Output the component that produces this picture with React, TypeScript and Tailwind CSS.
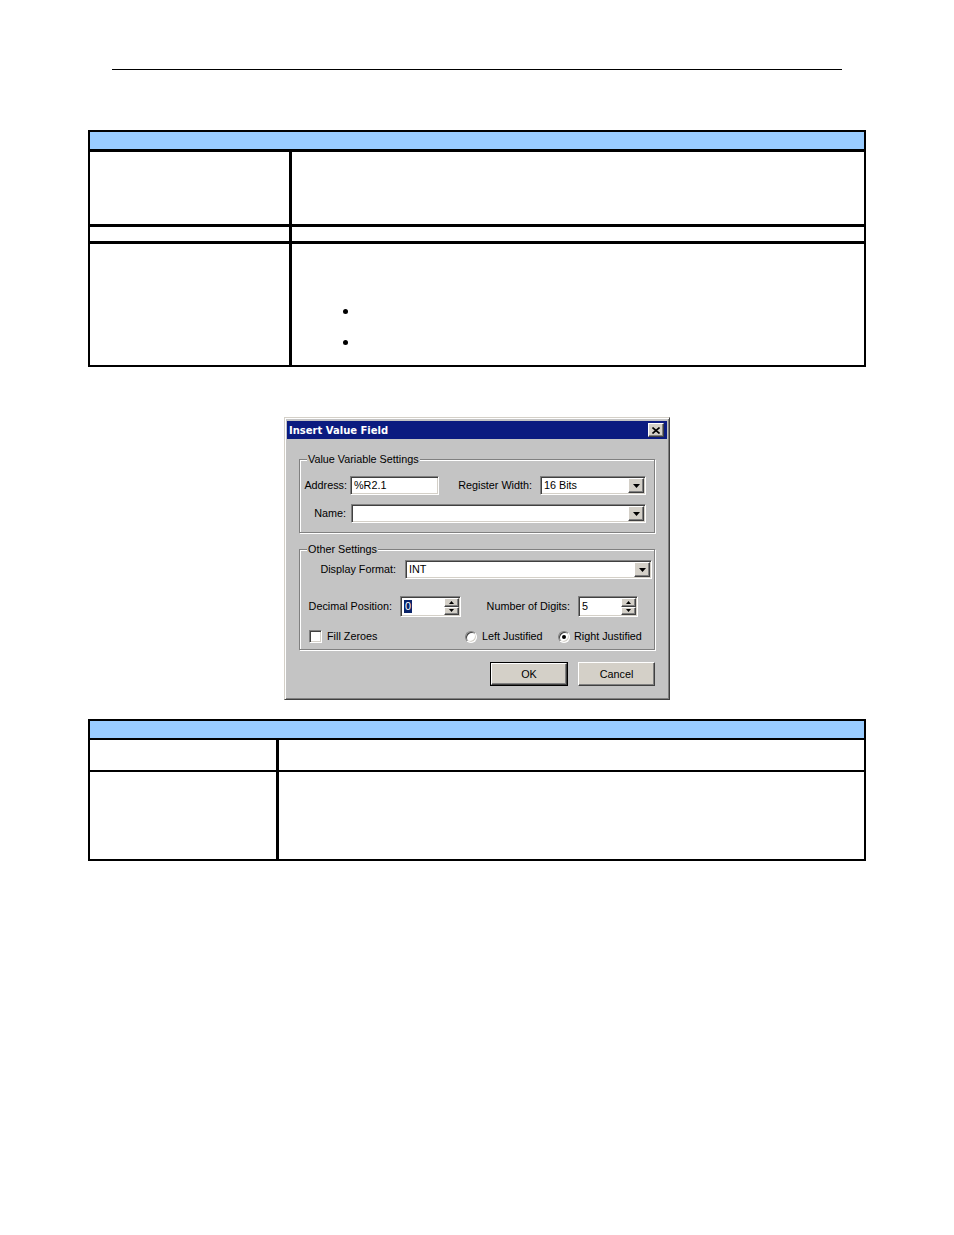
import type React from "react";

const sunken =
	"border border-t-[#808080] border-l-[#808080] border-b-white border-r-white shadow-[inset_1px_1px_0_#404040,inset_-1px_-1px_0_#d4d0c8] bg-white";
const raised =
	"border border-t-white border-l-white border-b-[#404040] border-r-[#404040] shadow-[inset_-1px_-1px_0_#808080] bg-[#d4d0c8]";

const DownArrow = () => (
	<svg width="7" height="4" viewBox="0 0 7 4">
		<polygon points="0,0 7,0 3.5,4" fill="#000" />
	</svg>
);

const TextField: React.FC<{ width: string; children?: React.ReactNode }> = ({
	width,
	children,
}) => (
	<div className={`${sunken} ${width} h-[19px] flex items-center pl-[3px]`}>
		{children}
	</div>
);

const SelectField: React.FC<{ width: string; value?: string; height?: string }> = ({
	width,
	value,
	height = "h-[19px]",
}) => (
	<div className={`${sunken} ${width} ${height} flex items-stretch p-px`}>
		<div className="flex-1 flex items-center pl-[2px]">{value}</div>
		<div className={`${raised} w-[16px] flex items-center justify-center`}>
			<DownArrow />
		</div>
	</div>
);

const SpinField: React.FC<{ width: string; children?: React.ReactNode }> = ({
	width,
	children,
}) => (
	<div className={`${sunken} ${width} h-[21px] flex items-stretch p-px`}>
		<div className="flex-1 flex items-center pl-[2px]">{children}</div>
		<div className="w-[15px] flex flex-col">
			<div className={`${raised} flex-1 flex items-center justify-center`}>
				<svg width="5" height="3" viewBox="0 0 5 3">
					<polygon points="2.5,0 5,3 0,3" fill="#000" />
				</svg>
			</div>
			<div className={`${raised} flex-1 flex items-center justify-center`}>
				<svg width="5" height="3" viewBox="0 0 5 3">
					<polygon points="0,0 5,0 2.5,3" fill="#000" />
				</svg>
			</div>
		</div>
	</div>
);

const Radio: React.FC<{ checked?: boolean }> = ({ checked }) => (
	<div
		className={`w-[12px] h-[12px] rounded-full border border-t-[#808080] border-l-[#808080] border-b-white border-r-white shadow-[inset_1px_1px_0_#404040,inset_-1px_-1px_0_#d4d0c8] bg-white flex items-center justify-center`}
	>
		{checked && <div className="w-[4px] h-[4px] rounded-full bg-black" />}
	</div>
);

const GroupBox: React.FC<{
	title: string;
	height: string;
	className?: string;
	children: React.ReactNode;
}> = ({ title, height, className = "", children }) => (
	<div
		className={`relative ml-[12px] w-[356px] ${height} border border-[#808080] shadow-[inset_1px_1px_0_#fff,1px_1px_0_#fff] ${className}`}
	>
		<span className="absolute -top-[8px] left-[7px] px-px bg-[#c4c4c4] leading-[14px]">
			{title}
		</span>
		{children}
	</div>
);

const Dialog = () => (
	<div
		className="mx-auto mt-[50px] w-[386px] h-[283px] bg-[#c4c4c4] border border-t-[#d4d0c8] border-l-[#d4d0c8] border-b-[#404040] border-r-[#404040] shadow-[inset_1px_1px_0_#fff,inset_-1px_-1px_0_#808080] pt-[3px] px-[2px] text-[10.8px] text-black"
		style={{ fontFamily: '"Liberation Sans", Arial, sans-serif' }}
	>
		<div className="h-[18px] bg-[#0b1b80] flex items-center justify-between pl-[2px]">
			<span
				className="text-white font-bold text-[10px]"
				style={{ fontFamily: '"DejaVu Sans", Verdana, sans-serif' }}
			>
				Insert Value Field
			</span>
			<div className={`${raised} w-[16px] h-[14px] mr-[3px] flex items-center justify-center`}>
				<svg width="8" height="7" viewBox="0 0 8 7">
					<path d="M0.5 0.5 L7.5 6.5 M7.5 0.5 L0.5 6.5" stroke="#000" strokeWidth="1.6" />
				</svg>
			</div>
		</div>

		<GroupBox title="Value Variable Settings" height="h-[74px]" className="mt-[20px] pt-[16px]">
			<div className="flex items-center h-[19px]">
				<div className="w-[47px] text-right">Address:</div>
				<div className="ml-[3px]">
					<TextField width="w-[89px]">%R2.1</TextField>
				</div>
				<div className="w-[101px] text-right pr-[8px]">Register Width:</div>
				<SelectField width="w-[106px]" value="16 Bits" />
			</div>
			<div className="flex items-center h-[19px] mt-[9px]">
				<div className="w-[46px] text-right">Name:</div>
				<div className="ml-[5px]">
					<SelectField width="w-[295px]" />
				</div>
			</div>
		</GroupBox>

		<GroupBox title="Other Settings" height="h-[101px]" className="mt-[16px] pt-[10px]">
			<div className="flex items-center h-[19px]">
				<div className="w-[96px] text-right">Display Format:</div>
				<div className="ml-[9px]">
					<SelectField width="w-[247px]" value="INT" />
				</div>
			</div>
			<div className="flex items-center h-[21px] mt-[17px]">
				<div className="w-[92px] text-right">Decimal Position:</div>
				<div className="ml-[8px]">
					<SpinField width="w-[61px]">
						<span className="bg-[#0a246a] text-white leading-[13px] px-px">0</span>
					</SpinField>
				</div>
				<div className="w-[117px] text-right pr-[8px]">Number of Digits:</div>
				<SpinField width="w-[60px]">5</SpinField>
			</div>
			<div className="flex items-center h-[13px] mt-[13px]">
				<div className="ml-[9px] w-[156px] flex items-center">
					<div className={`${sunken} w-[13px] h-[13px]`} />
					<span className="ml-[5px]">Fill Zeroes</span>
				</div>
				<div className="w-[93px] flex items-center">
					<Radio />
					<span className="ml-[5px]">Left Justified</span>
				</div>
				<div className="flex items-center">
					<Radio checked />
					<span className="ml-[4px]">Right Justified</span>
				</div>
			</div>
		</GroupBox>

		<div className="flex justify-end gap-[10px] mt-[12px] pr-[12px]">
			<div className="w-[78px] h-[24px] border border-black">
				<div className={`${raised} w-full h-full flex items-center justify-center`}>OK</div>
			</div>
			<div className={`${raised} w-[77px] h-[24px] flex items-center justify-center`}>
				Cancel
			</div>
		</div>
	</div>
);

const Dot = () => <div className="w-[5px] h-[5px] rounded-full bg-black" />;

export default function App() {
	return (
		<div className="w-[954px] min-h-[1235px] bg-white pt-[69px]">
			<div className="ml-[112px] w-[730px] h-px bg-black" />

			<div className="ml-[88px] mt-[60px] w-[778px] border-2 border-black">
				<div className="h-[17px] bg-[#99ccff] border-b-[3px] border-black box-content" />
				<div className="flex h-[72px] border-b-[3px] border-black box-content">
					<div className="w-[199px] border-r-[3px] border-black box-content" />
					<div className="flex-1" />
				</div>
				<div className="flex h-[14px] border-b-[3px] border-black box-content">
					<div className="w-[199px] border-r-[3px] border-black box-content" />
					<div className="flex-1" />
				</div>
				<div className="flex h-[121px]">
					<div className="w-[199px] border-r-[3px] border-black box-content" />
					<div className="flex-1 pl-[51px] pt-[65px]">
						<Dot />
						<div className="mt-[26px]">
							<Dot />
						</div>
					</div>
				</div>
			</div>

			<Dialog />

			<div className="ml-[88px] mt-[19px] w-[778px] border-2 border-black">
				<div className="h-[17px] bg-[#99ccff] border-b-2 border-black box-content" />
				<div className="flex h-[30px] border-b-2 border-black box-content">
					<div className="w-[186px] border-r-[3px] border-black box-content" />
					<div className="flex-1" />
				</div>
				<div className="flex h-[87px]">
					<div className="w-[186px] border-r-[3px] border-black box-content" />
					<div className="flex-1" />
				</div>
			</div>
		</div>
	);
}
